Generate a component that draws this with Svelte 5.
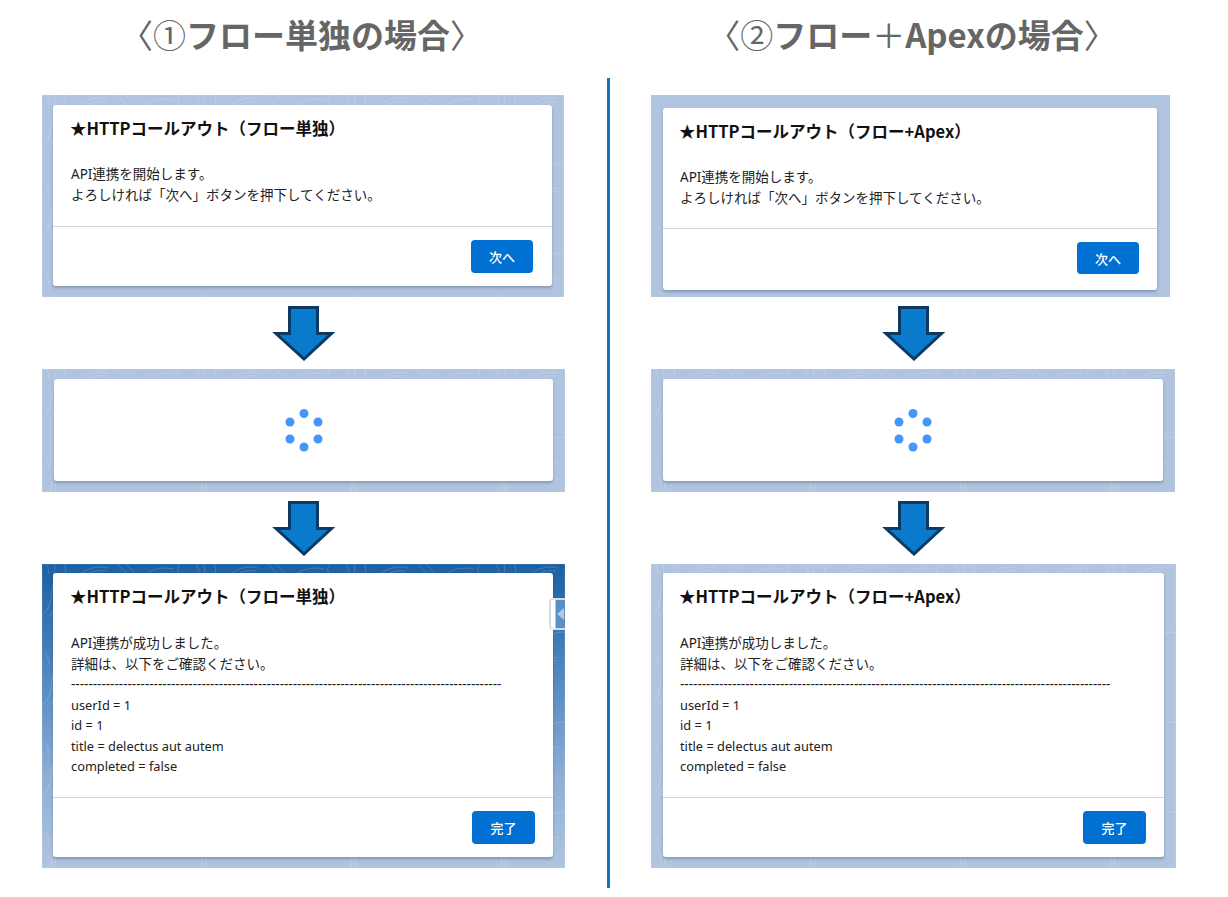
<script>
  const dots = [[19, 4.5], [5, 13], [33, 13], [5, 30], [33, 30], [19, 38]];
  const startLines = ['API連携を開始します。', 'よろしければ「次へ」ボタンを押下してください。'];
  const doneLines = ['API連携が成功しました。', '詳細は、以下をご確認ください。'];
  const fields = ['userId = 1', 'id = 1', 'title = delectus aut autem', 'completed = false'];
</script>

{#snippet texture()}
  <svg class="texture" width="100%" height="100%" aria-hidden="true">
    <defs>
      <pattern id="topo" width="150" height="90" patternUnits="userSpaceOnUse">
        <path d="M4 0c2 3 3 6 3 10M12 0c1 3 1 6 0 10M22 0c2 3 2 6 1 9M40 9c8-6 18-7 26-5M46 10c6-3 12-4 18-3M76 0c3 4 6 7 10 10M84 0c3 3 5 6 8 8M104 10c8-6 18-7 28-5M138 0c-3 4-3 7 0 10" />
        <path d="M2 50c9-10 6-18 9-30M8 52c7-10 4-18 6-28M136 40c8 10 5 20 12 34M60 70c14-6 24 4 36 0" />
      </pattern>
    </defs>
    <rect width="100%" height="100%" fill="url(#topo)" />
  </svg>
{/snippet}

{#snippet arrow()}
  <svg class="arrow" width="64" height="55" viewBox="0 0 64 55" aria-hidden="true">
    <path d="M17.5 1.5h28v26h14L32 53 4 27.5h13.500z" />
  </svg>
{/snippet}

{#snippet start(label, cls)}
  <section class="panel {cls}">
    {#if cls === 'a1'}{@render texture()}{/if}
    <div class="card">
      <h2>★HTTPコールアウト（{label}）</h2>
      <div class="body">
        {#each startLines as line}<p>{line}</p>{/each}
      </div>
      <div class="foot"><button>次へ</button></div>
    </div>
  </section>
{/snippet}

{#snippet loading(cls)}
  <section class="panel {cls}">
    {@render texture()}
    <div class="card spin">
      <svg width="38" height="43" viewBox="0 0 38 43" aria-hidden="true">
        {#each dots as d}<circle cx={d[0]} cy={d[1]} r="4.500" />{/each}
      </svg>
    </div>
  </section>
{/snippet}

{#snippet done(label, cls)}
  <section class="panel {cls}">
    {@render texture()}
    <div class="card">
      <h2>★HTTPコールアウト（{label}）</h2>
      <div class="body result">
        {#each doneLines as line}<p>{line}</p>{/each}
        <p>{'-'.repeat(99)}</p>
        {#each fields as line}<p class="field">{line}</p>{/each}
      </div>
      <div class="foot"><button>完了</button></div>
    </div>
    {#if cls === 'a3'}
      <div class="tab"><span></span></div>
    {/if}
  </section>
{/snippet}

<main class="page">
  <div class="col">
    <h1><span class="thin">〈①</span>フロー単独の場合<span class="thin">〉</span></h1>
    {@render start('フロー単独', 'a1')}
    {@render arrow()}
    {@render loading('a2')}
    {@render arrow()}
    {@render done('フロー単独', 'a3')}
  </div>
  <div class="rule"></div>
  <div class="col right">
    <h1><span class="thin">〈②</span>フロー<span class="thin">＋</span>Apexの場合<span class="thin">〉</span></h1>
    {@render start('フロー+Apex', 'b1')}
    {@render arrow()}
    {@render loading('b2')}
    {@render arrow()}
    {@render done('フロー+Apex', 'b3')}
  </div>
</main>

<style>
  :global(body) {
    background: #fff;
    font-family: "Noto Sans", "Noto Sans CJK JP", sans-serif;
  }

  .page {
    display: grid;
    grid-template-columns: 523px 3px 525px;
    column-gap: 42px;
    padding-left: 42px;
    width: 1228px;
    height: 897px;
    box-sizing: border-box;
    overflow: hidden;
  }

  .rule {
    background: #0b76bd;
    margin-top: 78px;
    margin-right: 1px;
    width: 3px;
    height: 810px;
  }

  .col {
    display: flex;
    flex-direction: column;
  }
  .right {
    margin-left: -1px;
  }

  h1 {
    height: 95px;
    margin: 0 4px 0 0;
    padding-top: 11px;
    box-sizing: border-box;
    text-align: center;
    font-size: 33px;
    line-height: 46px;
    font-weight: 700;
    color: #666;
    font-family: "Noto Sans CJK JP", sans-serif;
    white-space: nowrap;
  }
  .thin {
    font-weight: 400;
  }

  .arrow {
    display: block;
    margin: 9px 0 8px 230px;
  }
  .right .arrow {
    margin-left: 231px;
  }
  .arrow path {
    fill: #0a7bcc;
    stroke: #0d3a63;
    stroke-width: 3;
  }

  .panel {
    position: relative;
    display: flex;
    box-sizing: border-box;
    background: #b0c4df;
  }
  .texture {
    position: absolute;
    inset: 0;
    fill: none;
    stroke: #fff;
    stroke-opacity: 0.16;
    stroke-width: 1;
  }

  .a1 { width: 522px; height: 202px; padding: 10px 12px 11px 11px; }
  .a2 { width: 523px; height: 123px; padding: 10px 12px 11px 12px; }
  .a3 {
    width: 523px;
    height: 304px;
    padding: 9px 12px 11px 11px;
    background: linear-gradient(#1b5fa3 0, #4f86bf 35%, #8eaed6 70%, #b0c4df 100%);
  }
  .b1 { width: 519px; height: 202px; padding: 13px 13px 7px 12px; }
  .b2 { width: 524px; height: 123px; padding: 10px 12px 11px 12px; }
  .b3 { width: 525px; height: 304px; padding: 9px 12px 11px 12px; }

  .card {
    position: relative;
    flex: 1;
    display: flex;
    flex-direction: column;
    background: #fff;
    border-radius: 3px;
    box-shadow: 0 2px 3px rgba(0, 0, 0, 0.22);
  }
  .spin {
    align-items: center;
    justify-content: center;
  }
  .spin circle {
    fill: #4596fb;
  }

  h2 {
    margin: 0;
    padding: 11px 17px 0;
    font-size: 16.500px;
    line-height: 24px;
    font-weight: 700;
    color: #111;
    font-family: "Noto Sans CJK JP", sans-serif;
  }
  .right h2 {
    padding-left: 16px;
  }

  .body {
    flex: 1;
    padding: 24px 18px 0;
    font-size: 13.500px;
    line-height: 20.500px;
    color: #222;
    white-space: nowrap;
    overflow: hidden;
  }
  .body.result {
    padding-top: 25px;
  }
  .right .body {
    padding-left: 17px;
  }
  .body p {
    margin: 0;
  }
  .body .field {
    font-size: 12.800px;
  }

  .foot {
    display: flex;
    justify-content: flex-end;
    padding: 13px 18px 13px 0;
    border-top: 1px solid #d4d4d4;
  }
  .b1 .foot {
    padding-bottom: 16px;
  }
  button {
    width: 63px;
    height: 33px;
    padding: 0;
    border: 0;
    border-radius: 4px;
    background: #0070d2;
    color: #fff;
    font: 500 13px "Noto Sans CJK JP", sans-serif;
  }
  .a1 button {
    width: 62px;
    margin-right: 1px;
  }
  .b1 button {
    width: 62px;
    height: 32px;
  }

  /* side tab poking over the card edge */
  .tab {
    position: absolute;
    left: 507px;
    top: 34px;
    width: 16px;
    height: 32px;
    box-sizing: border-box;
    border: 2px solid rgba(222, 228, 238, 0.9);
    border-right: 0;
    border-radius: 4px 0 0 4px;
    background: linear-gradient(to right, #fff 0, #fff 4px, #5b8ec4 5px);
  }
  .tab span {
    position: absolute;
    left: 6px;
    top: 8px;
    border: 6px solid transparent;
    border-left: 0;
    border-right: 7px solid rgba(200, 215, 232, 0.8);
  }
</style>
